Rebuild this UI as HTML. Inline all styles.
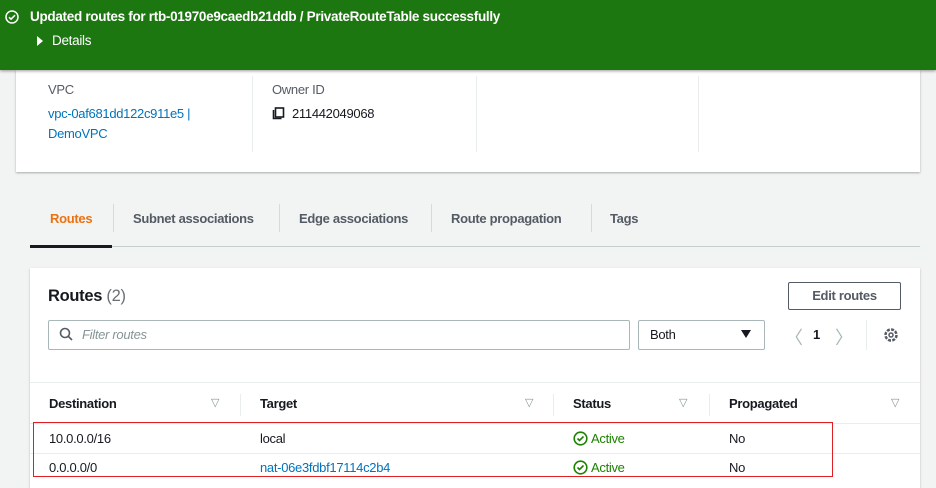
<!DOCTYPE html>
<html><head><meta charset="utf-8"><style>
*{box-sizing:border-box;margin:0;padding:0}
body{width:936px;height:484px;overflow:hidden;background:#f2f3f3;font-family:"Liberation Sans",sans-serif;font-size:13px;color:#16191f;position:relative;letter-spacing:-0.3px}
.a{position:absolute;white-space:nowrap}
.b{font-weight:bold}
.link{color:#0073bb}
</style></head><body>
<div class="a" style="left:16px;top:70px;width:904px;height:102px;background:#fff;box-shadow:0 1px 2px rgba(0,0,0,.3)"></div>
<div class="a" style="left:252px;top:76px;width:1px;height:76px;background:#eaeded"></div>
<div class="a" style="left:476px;top:76px;width:1px;height:76px;background:#eaeded"></div>
<div class="a" style="left:698px;top:76px;width:1px;height:76px;background:#eaeded"></div>
<div class="a" style="left:48px;top:82px;color:#545b64">VPC</div>
<div class="a link" style="left:48px;top:106px">vpc-0af681dd122c911e5 |</div>
<div class="a link" style="left:48px;top:126px">DemoVPC</div>
<div class="a" style="left:272px;top:82px;color:#545b64">Owner ID</div>
<svg class="a" style="left:272px;top:107px" width="13" height="13" viewBox="0 0 13 13"><rect x="3.5" y="1" width="8" height="9" fill="none" stroke="#16191f" stroke-width="1.6"/><path d="M1.5 3v8.5h8" fill="none" stroke="#16191f" stroke-width="1.6"/></svg>
<div class="a" style="left:292px;top:106px">211442049068</div>

<div class="a" style="left:0;top:0;width:936px;height:70px;background:#1d7710;box-shadow:0 1px 3px rgba(0,0,0,.4)"></div>
<svg class="a" style="left:5px;top:10px" width="14" height="14" viewBox="0 0 14 14"><circle cx="7" cy="7" r="6" fill="none" stroke="#fff" stroke-width="1.5"/><path d="M4 7.2l2 2 4-4" fill="none" stroke="#fff" stroke-width="1.5"/></svg>
<div class="a b" style="left:30px;top:9px;color:#fff;font-size:13.5px">Updated routes for rtb-01970e9caedb21ddb / PrivateRouteTable successfully</div>
<div class="a" style="left:37px;top:36px;width:0;height:0;border-left:6px solid #fff;border-top:5px solid transparent;border-bottom:5px solid transparent"></div>
<div class="a" style="left:52px;top:33px;color:#fff;font-size:13.5px">Details</div>

<div class="a b" style="left:50px;top:211px;color:#ec7211">Routes</div>
<div class="a b" style="left:133px;top:211px;color:#545b64">Subnet associations</div>
<div class="a b" style="left:299px;top:211px;color:#545b64">Edge associations</div>
<div class="a b" style="left:451px;top:211px;color:#545b64">Route propagation</div>
<div class="a b" style="left:610px;top:211px;color:#545b64">Tags</div>
<div class="a" style="left:113px;top:204px;width:1px;height:28px;background:#d5dbdb"></div>
<div class="a" style="left:279px;top:204px;width:1px;height:28px;background:#d5dbdb"></div>
<div class="a" style="left:431px;top:204px;width:1px;height:28px;background:#d5dbdb"></div>
<div class="a" style="left:591px;top:204px;width:1px;height:28px;background:#d5dbdb"></div>
<div class="a" style="left:30px;top:246px;width:890px;height:1px;background:#c5d0cc"></div>
<div class="a" style="left:30px;top:245px;width:82px;height:3px;background:#16191f"></div>

<div class="a" style="left:30px;top:268px;width:890px;height:220px;background:#fff;box-shadow:0 1px 2px rgba(0,0,0,.25)"></div>
<div class="a" style="left:48px;top:287px;font-size:16.5px"><span class="b">Routes</span> <span style="color:#687078">(2)</span></div>
<div class="a b" style="left:788px;top:282px;width:113px;height:28px;border:1px solid #545b64;border-radius:2px;text-align:center;line-height:26px;color:#545b64">Edit routes</div>
<div class="a" style="left:48px;top:320px;width:582px;height:30px;border:1px solid #aab7b8;border-radius:2px"></div>
<svg class="a" style="left:59px;top:327px" width="14" height="14" viewBox="0 0 14 14"><circle cx="6" cy="6" r="4.5" fill="none" stroke="#545b64" stroke-width="1.6"/><path d="M9.3 9.3L13 13" stroke="#545b64" stroke-width="1.6"/></svg>
<div class="a" style="left:82px;top:327px;color:#879596;font-style:italic">Filter routes</div>
<div class="a" style="left:638px;top:320px;width:127px;height:30px;border:1px solid #aab7b8;border-radius:2px"></div>
<div class="a" style="left:650px;top:327px">Both</div>
<div class="a" style="left:741px;top:330px;width:0;height:0;border-top:8px solid #16191f;border-left:5px solid transparent;border-right:5px solid transparent"></div>
<div class="a" style="left:785px;top:324px;color:#aab7b8;font-size:18px">〈</div>
<div class="a b" style="left:813px;top:327px">1</div>
<div class="a" style="left:835px;top:324px;color:#aab7b8;font-size:18px">〉</div>
<div class="a" style="left:866px;top:320px;width:1px;height:30px;background:#eaeded"></div>
<svg class="a" style="left:883px;top:327px" width="16" height="16" viewBox="0 0 16 16"><circle cx="8" cy="8" r="5.5" fill="none" stroke="#545b64" stroke-width="2.5" stroke-dasharray="3 1.3"/><circle cx="8" cy="8" r="2" fill="none" stroke="#545b64" stroke-width="1.5"/></svg>

<div class="a" style="left:30px;top:382px;width:890px;height:1px;background:#eaeded"></div>
<div class="a" style="left:30px;top:423px;width:890px;height:1px;background:#eaeded"></div>
<div class="a" style="left:30px;top:453px;width:890px;height:1px;background:#eaeded"></div>
<div class="a b" style="left:49px;top:396px">Destination</div>
<div class="a b" style="left:260px;top:396px">Target</div>
<div class="a b" style="left:573px;top:396px">Status</div>
<div class="a b" style="left:729px;top:396px">Propagated</div>
<div class="a" style="left:240px;top:394px;width:1px;height:22px;background:#eaeded"></div>
<div class="a" style="left:553px;top:394px;width:1px;height:22px;background:#eaeded"></div>
<div class="a" style="left:709px;top:394px;width:1px;height:22px;background:#eaeded"></div>
<div class="a" style="left:211px;top:396px;color:#879596;font-size:11px">▽</div>
<div class="a" style="left:525px;top:396px;color:#879596;font-size:11px">▽</div>
<div class="a" style="left:679px;top:396px;color:#879596;font-size:11px">▽</div>
<div class="a" style="left:891px;top:396px;color:#879596;font-size:11px">▽</div>

<div class="a" style="left:49px;top:431px">10.0.0.0/16</div>
<div class="a" style="left:260px;top:431px">local</div>
<svg class="a" style="left:573px;top:431px" width="15" height="15" viewBox="0 0 15 15"><circle cx="7.5" cy="7.5" r="6.3" fill="none" stroke="#1d8102" stroke-width="1.6"/><path d="M4.5 7.5l2 2 4-4" fill="none" stroke="#1d8102" stroke-width="1.6"/></svg>
<div class="a" style="left:591px;top:431px;color:#1d8102">Active</div>
<div class="a" style="left:729px;top:431px">No</div>
<div class="a" style="left:49px;top:460px">0.0.0.0/0</div>
<div class="a link" style="left:260px;top:460px">nat-06e3fdbf17114c2b4</div>
<svg class="a" style="left:573px;top:460px" width="15" height="15" viewBox="0 0 15 15"><circle cx="7.5" cy="7.5" r="6.3" fill="none" stroke="#1d8102" stroke-width="1.6"/><path d="M4.5 7.5l2 2 4-4" fill="none" stroke="#1d8102" stroke-width="1.6"/></svg>
<div class="a" style="left:591px;top:460px;color:#1d8102">Active</div>
<div class="a" style="left:729px;top:460px">No</div>
<div class="a" style="left:33px;top:422px;width:800px;height:55px;border:1.5px solid #e02020"></div>
</body></html>
